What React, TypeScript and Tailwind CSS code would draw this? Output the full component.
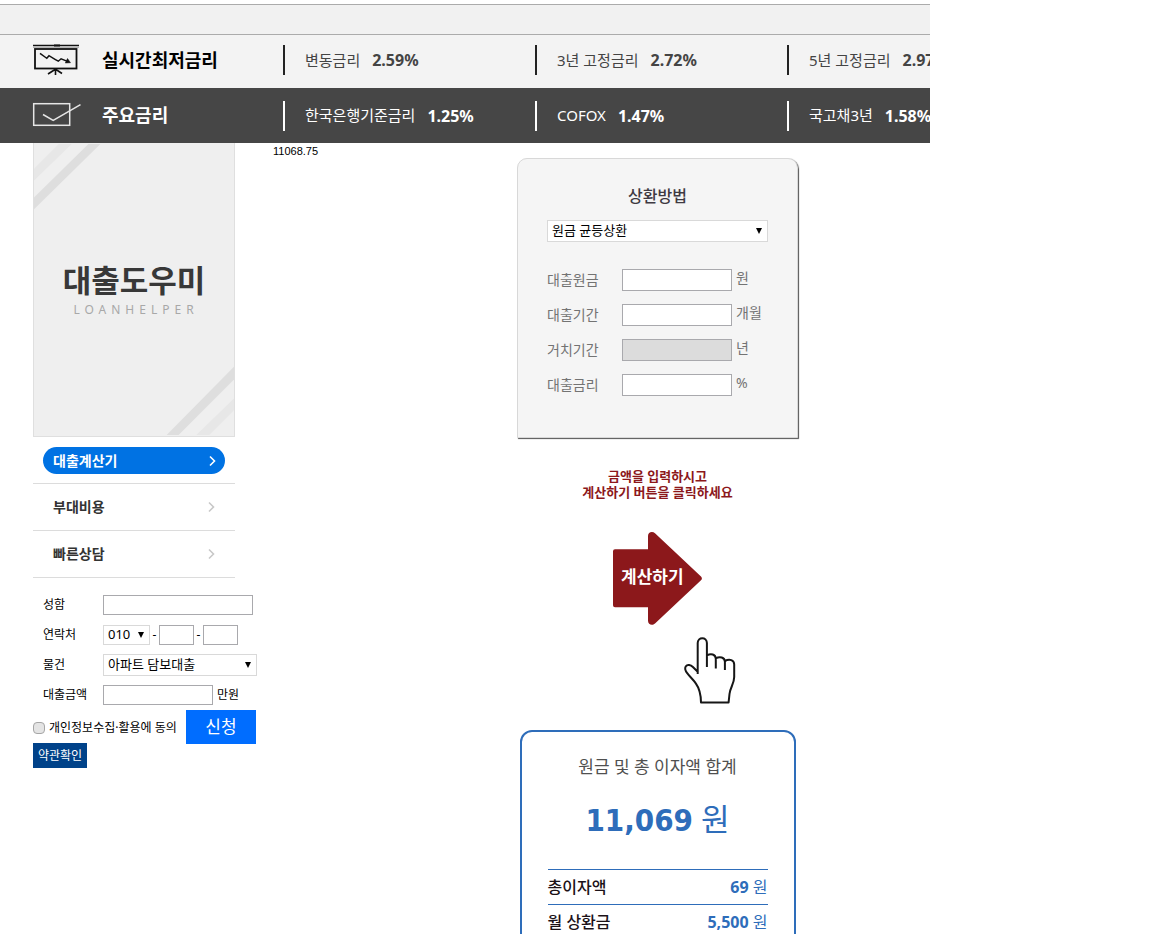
import React from 'react';

const BoardIcon = () => (
    <svg viewBox="32 43 50 34" className="w-[50px] h-[34px] shrink-0" fill="none" stroke="#111" aria-hidden="true">
        <path d="M33 45.5H79" strokeWidth="1.4" />
        <path d="M54 45.5H60" strokeWidth="2" />
        <path d="M33 47.5H79" stroke="#b5b5b5" strokeWidth="1" />
        <rect x="35" y="49" width="41.5" height="19.5" strokeWidth="1.8" />
        <path d="M40 53.3L45 57l1.8 1.3L49 55.7l6 3.6 3.3 1.9 2.8-2.4 7 2.8" strokeWidth="1.5" />
        <path d="M67.5 58.5l3 4.2-5.2.3z" fill="#111" strokeWidth="0.5" />
        <path d="M55.5 69V75M55 69.5l-7 4.5M56 69.5l6 4" strokeWidth="1.6" />
    </svg>
);

const CheckIcon = () => (
    <svg viewBox="32 99 50 34" className="w-[50px] h-[34px] shrink-0" fill="none" stroke="#e6e6e6" strokeWidth="1.5" aria-hidden="true">
        <rect x="33.7" y="103.7" width="36" height="21.6" />
        <path d="M43 114.5l10.2 6L80.5 104.7" />
    </svg>
);

const HandIcon = () => (
    <svg viewBox="682 636 56 70" className="w-14 h-[70px]" fill="none" stroke="#161616" strokeWidth="2" strokeLinejoin="round" aria-hidden="true">
        <path d="M697.7 674V643c0-6.4 9.2-6.4 9.2 0v24M706.9 655.5c4-2.4 8.7-1.2 8.9 3.2V668.5M715.8 658.3c4-2.2 8.9-1 9.1 3.4V670M724.9 661c4.6-2.4 9.3-1 9.3 3.4V677c0 7-4.3 11-4.7 17l-.9 8.4H701c-.1-8.5-1.3-13.5-5.2-19-2.6-4-5.8-6.4-8.6-10.2-1.500-2-2.700-4.700-1.500-6.700 1.700-2.600 5.100-1.600 7.200.5l4.800 4.800" />
    </svg>
);

const Chevron = () => (
    <svg viewBox="0 0 8 12" className="w-2 h-3" fill="none" stroke="currentColor" strokeWidth="1.6" aria-hidden="true">
        <path d="M2 1.500l4.500 4.500L2 10.500" />
    </svg>
);

const liveRates = [
    { name: '변동금리', rate: '2.59%' },
    { name: '3년 고정금리', rate: '2.72%' },
    { name: '5년 고정금리', rate: '2.97%' },
];

const mainRates = [
    { name: '한국은행기준금리', rate: '1.25%' },
    { name: 'COFOX', rate: '1.47%' },
    { name: '국고채3년', rate: '1.58%' },
];

const loanFields = [
    { id: 'principal', label: '대출원금', unit: '원' },
    { id: 'period', label: '대출기간', unit: '개월' },
    { id: 'grace', label: '거치기간', unit: '년', disabled: true },
    { id: 'rate', label: '대출금리', unit: '%' },
];

const results = [
    { name: '총이자액', value: '69' },
    { name: '월 상환금', value: '5,500' },
];

type RateRowProps = {
    icon: React.ReactNode;
    title: string;
    rates: { name: string; rate: string }[];
    rowClass: string;
    cellClass: string;
};

const RateRow = ({ icon, title, rates, rowClass, cellClass }: RateRowProps) => (
    <div className={`flex items-center overflow-hidden whitespace-nowrap pl-8 ${rowClass}`}>
        <div className="flex items-center gap-5 w-[251px] shrink-0">
            {icon}
            <h2 className="text-[18px] font-bold">{title}</h2>
        </div>
        {rates.map((item) => (
            <div key={item.name} className={`flex items-center gap-3 h-[30px] w-[252px] shrink-0 border-l-2 pl-5 ${cellClass}`}>
                <span className="text-[15px]">{item.name}</span>
                <strong className="text-base font-bold">{item.rate}</strong>
            </div>
        ))}
    </div>
);

type SelectProps = { id: string; label?: string; options: string[]; className: string };

const Select = ({ id, label, options, className }: SelectProps) => (
    <div className={`relative ${className}`}>
        <select id={id} aria-label={label} className="appearance-none block w-full h-full bg-white border border-[#d9d9d9] pl-1 pb-[2px] text-[13px] leading-4 text-black">
            {options.map((o) => (
                <option key={o}>{o}</option>
            ))}
        </select>
        <svg viewBox="0 0 6 6" className="absolute right-[6px] top-1/2 -mt-[3px] w-[6px] h-[6px] pointer-events-none" aria-hidden="true">
            <path d="M0 0h6L3 6z" />
        </svg>
    </div>
);

const Banner = () => (
    <div className="relative flex flex-col items-center justify-center h-[294px] bg-[#efefef] border border-t-0 border-[#dfdfdf] overflow-hidden">
        <svg viewBox="0 0 202 294" className="absolute inset-0 w-full h-full" aria-hidden="true">
            <path d="M25 0h13L0 37V25z" fill="#e7e7e7" />
            <path d="M55 0h12L0 66V54z" fill="#dedede" />
            <path d="M202 225v13l-56 56h-12z" fill="#dedede" />
            <path d="M202 257v12l-25 25h-13z" fill="#e7e7e7" />
        </svg>
        <h1 className="relative text-[31px] leading-10 font-bold text-[#383838]">대출도우미</h1>
        <p className="relative pl-1 text-xs leading-5 tracking-[5px] text-[#a8a8a8]">LOANHELPER</p>
    </div>
);

const SideMenu = () => (
    <nav className="text-sm font-bold text-[#333]">
        <div className="h-[47px] border-b border-[#dcdcdc] px-[10px] pt-[10px]">
            <a href="#calc" className="flex items-center justify-between h-[27px] rounded-full bg-[#0072e3] pl-[10px] pr-[9px] text-white">
                대출계산기
                <Chevron />
            </a>
        </div>
        {['부대비용', '빠른상담'].map((name) => (
            <a key={name} href="#menu" className="flex items-center justify-between h-[47px] border-b border-[#dcdcdc] px-5">
                {name}
                <span className="text-[#c8c8c8]">
                    <Chevron />
                </span>
            </a>
        ))}
    </nav>
);

const inputClass = 'h-5 border border-[#a9a9ad] bg-white px-1';

const ContactForm = () => (
    <form className="pt-[17px] text-xs text-black">
        <div className="flex flex-col gap-[10px] pl-[10px]">
            <div className="flex items-center h-5">
                <label htmlFor="name" className="w-[60px]">성함</label>
                <input id="name" className={`w-[150px] ${inputClass}`} />
            </div>
            <div className="flex items-center h-5">
                <label htmlFor="phone1" className="w-[60px]">연락처</label>
                <Select id="phone1" options={['010', '011', '016']} className="w-[47px] h-5" />
                <span className="w-[9px] text-center">-</span>
                <input aria-label="연락처 2" className={`w-[35px] ${inputClass}`} />
                <span className="w-[9px] text-center">-</span>
                <input aria-label="연락처 3" className={`w-[35px] ${inputClass}`} />
            </div>
            <div className="flex items-center h-5">
                <label htmlFor="item" className="w-[60px]">물건</label>
                <Select id="item" options={['아파트 담보대출']} className="w-[154px] h-[22px]" />
            </div>
            <div className="flex items-center h-5">
                <label htmlFor="amount" className="w-[60px]">대출금액</label>
                <input id="amount" className={`w-[110px] ${inputClass}`} />
                <span className="pl-1">만원</span>
            </div>
        </div>
        <div className="flex items-center justify-between pt-[5px] w-[223px]">
            <label className="flex items-center gap-1 pt-[2px] whitespace-nowrap">
                <input type="checkbox" className="appearance-none w-3 h-3 rounded-sm border border-[#a6a6a6] bg-[#e4e4e4] checked:bg-[#0072e3]" />
                개인정보수집·활용에 동의
            </label>
            <button type="submit" className="w-[70px] h-[34px] bg-[#006dff] text-[17px] text-white">신청</button>
        </div>
        <button type="button" className="block h-[25px] px-[5px] -mt-px bg-[#004289] text-white">약관확인</button>
    </form>
);

const Calculator = () => (
    <form className="w-full h-[280px] rounded-t-[10px] border border-[#d8d8d8] bg-[#f5f5f5] px-[29px] pt-[25px] shadow-[1px_1px_1px_#555]">
        <label htmlFor="method" className="block text-center text-base leading-6 font-medium text-[#3f3a42]">상환방법</label>
        <Select id="method" options={['원금 균등상환', '원리금 균등상환', '만기일시상환']} className="h-[22px] mt-3" />
        <div className="flex flex-col gap-[13px] mt-[27px] text-sm text-[#737373]">
            {loanFields.map((f) => (
                <div key={f.id} className="flex items-center h-[22px]">
                    <label htmlFor={f.id} className="w-[75px]">{f.label}</label>
                    <input id={f.id} disabled={f.disabled} className="w-[110px] h-[22px] border border-[#a9a9ad] bg-white px-1 disabled:bg-[#dcdcdc]" />
                    <span className="pl-1 pb-1">{f.unit}</span>
                </div>
            ))}
        </div>
    </form>
);

const ResultCard = () => (
    <section className="w-[276px] rounded-xl border-2 border-[#2e6dba] px-[26px] pt-[23px] pb-8">
        <h3 className="text-center text-[17px] leading-6 text-[#505050]">원금 및 총 이자액 합계</h3>
        <p className="mt-5 text-center text-[31px] leading-10 text-[#2e6dba]">
            <strong className="font-['DejaVu_Sans_Condensed','DejaVu_Sans',sans-serif] font-bold">11,069</strong> 원
        </p>
        <table className="w-full mt-[29px] border-separate border-spacing-0 text-base leading-6 text-[#2e6dba]">
            <tbody>
                {results.map((r) => (
                    <tr key={r.name}>
                        <th scope="row" className="h-[35px] border-t border-[#2e6dba] text-left font-medium text-[#1c1218]">{r.name}</th>
                        <td className="h-[35px] border-t border-[#2e6dba] text-right">
                            <strong className="font-bold">{r.value}</strong> 원
                        </td>
                    </tr>
                ))}
            </tbody>
        </table>
    </section>
);

const App = () => {
    return (
        <div className="h-screen overflow-hidden bg-white pt-1 font-['Noto_Sans','Noto_Sans_CJK_KR',sans-serif]">
            <header className="max-w-[930px]">
                <div className="h-[31px] border-y border-[#ababab] bg-[#f1f1f1]"></div>
                <RateRow
                    icon={<BoardIcon />}
                    title="실시간최저금리"
                    rates={liveRates}
                    rowClass="h-[53px] pb-[3px] bg-[#f3f3f3] text-black"
                    cellClass="border-[#222] text-[#444]"
                />
                <RateRow
                    icon={<CheckIcon />}
                    title="주요금리"
                    rates={mainRates}
                    rowClass="h-[55px] bg-[#464646] text-white"
                    cellClass="border-white"
                />
            </header>
            <main className="flex pl-[33px]">
                <aside className="w-[224px] shrink-0">
                    <div className="w-[202px]">
                        <Banner />
                        <SideMenu />
                    </div>
                    <ContactForm />
                </aside>
                <p className="w-[244px] shrink-0 ml-4 font-['Liberation_Sans',sans-serif] text-[11px] leading-4 text-black">11068.75</p>
                <div className="flex flex-col items-center w-[281px] shrink-0 pt-[15px]">
                    <Calculator />
                    <p className="mt-[30px] text-center text-[13px] leading-4 font-bold text-[#8c181b]">
                        금액을 입력하시고
                        <br />
                        계산하기 버튼을 클릭하세요
                    </p>
                    <button type="button" className="grid items-center w-[89px] mt-8 text-white">
                        <svg viewBox="613 532 89 93" className="[grid-area:1/1] w-full h-[93px]" fill="#8c181b" aria-hidden="true">
                            <path d="M615 549.300h33V536c0-3.800 4.300-5.300 7-2.700l46 43.200q1.800 1.900 0 3.800l-46 43.200c-2.700 2.600-7 1.200-7-2.700v-13.500h-33q-2 0-2-2v-54q0-2 2-2z" />
                        </svg>
                        <span className="[grid-area:1/1] pl-2 pb-[3px] text-left text-[17px] leading-6 font-bold">계산하기</span>
                    </button>
                    <div className="self-end mt-[11px] pr-[60px]">
                        <HandIcon />
                    </div>
                    <div className="mt-6">
                        <ResultCard />
                    </div>
                </div>
            </main>
        </div>
    );
};

export default App;
